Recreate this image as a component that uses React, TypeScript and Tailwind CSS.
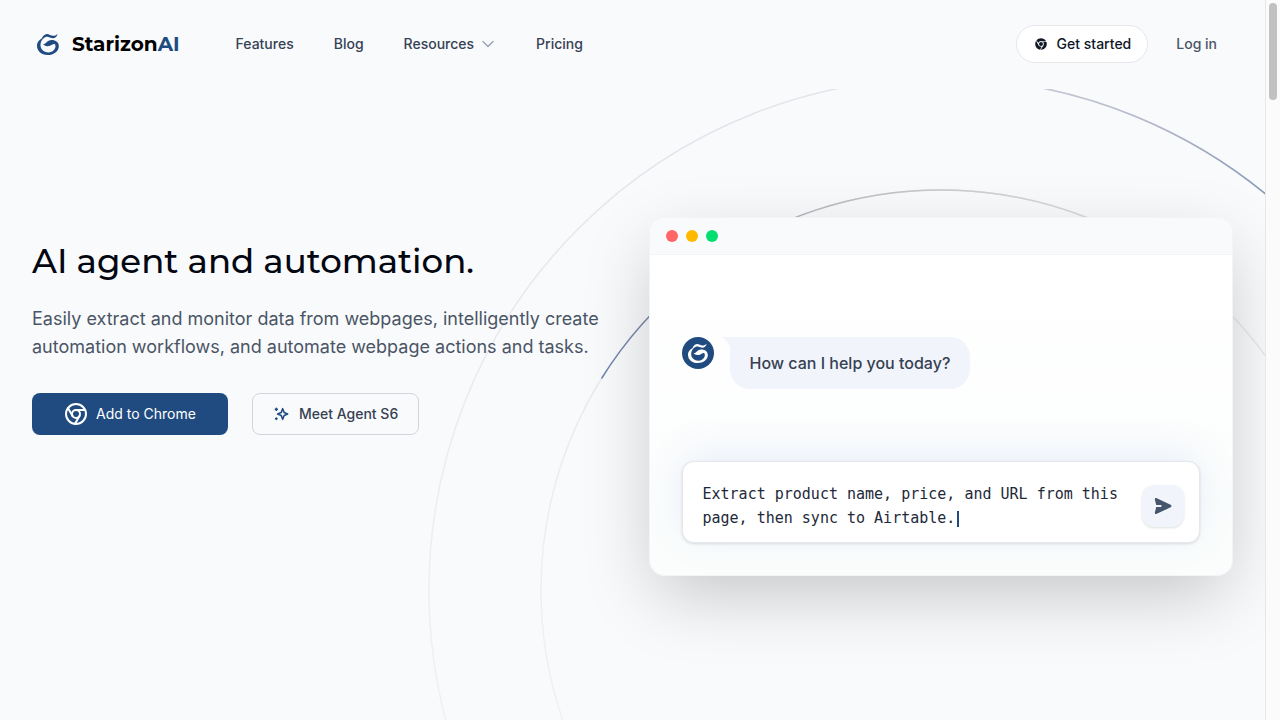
import { Chrome } from 'lucide-react'
import { FaChrome } from 'react-icons/fa'
import { HiOutlineChevronDown } from 'react-icons/hi2'

const LogoMark = ({ className }: { className?: string }) => (
  <svg viewBox="0 0 24 24" fill="currentColor" className={className} aria-hidden="true">
    <path d="M5.500 5.200C8 1.300 10.800.2 13.600 1.900c3.400 1.800 5.900 1.600 8.900-.9-1.500 4.500-4.500 5.700-8.500 3.900-2.500-1.200-4.800-1-7.500 1.500z" />
    <path d="M8 5C3 6.500 0 9.800 0 14c0 6 5 10 11.500 10 7 0 12.300-4 12.300-9.600l-3.600-1.200c.5 4.800-3.200 8-7.700 8C7.500 21.200 3.800 18 3.800 13.200 3.800 10 5 7.500 8 5z" />
    <path d="M6.500 12.600c3-.2 4.800-4.900 9.300-4.900 4.800 0 8 2.500 8 6.700l-3.500-.4c-.2-1.500-1-2.200-2.500-1.800-2.500.7-3.500 2.300-6.800 2.200-2-.1-3-1-4.500-1.800z" />
  </svg>
)

const Sparkles = () => (
  <svg
    viewBox="0 0 24 24"
    fill="none"
    stroke="currentColor"
    strokeWidth="2.4"
    strokeLinejoin="round"
    strokeLinecap="round"
    className="size-4 text-[#204b80]"
    aria-hidden="true"
  >
    <path d="M14.500 4l2.200 5.800L22 12l-5.300 2.200-2.200 5.800-2.200-5.800L7 12l5.300-2.200z" />
    <path d="M5 3.500v3M3.500 5h3M5 18v2M4 19h2" />
  </svg>
)

const SendIcon = () => (
  <svg viewBox="0 0 20 20" fill="currentColor" className="size-[18px]" aria-hidden="true">
    <path d="M1 3C.7 1.600 1.800.7 3.100 1.300l15.300 7.200c1.300.6 1.300 2.400 0 3L3.100 18.700C1.800 19.300.7 18.400 1 17l1.500-5.900h5.700V8.900H2.500z" />
  </svg>
)

const Orbits = () => (
  <svg
    viewBox="0 0 1026 1026"
    fill="none"
    className="pointer-events-none absolute -top-[140px] left-1/2 -z-10 size-[1026px] max-w-none -translate-x-1/2"
    aria-hidden="true"
  >
    <defs>
      <linearGradient id="base" x1="0" y1="0" x2="0" y2="1">
        <stop offset="0" stopColor="#e2e4e9" />
        <stop offset="0.5" stopColor="#edeff2" />
        <stop offset="1" stopColor="#f3f4f6" />
      </linearGradient>
      <linearGradient id="outer" gradientUnits="userSpaceOnUse" x1="513" y1="0" x2="850" y2="140">
        <stop offset="0" stopColor="#d3d5da" />
        <stop offset="0.6" stopColor="#b3b7c9" />
        <stop offset="1" stopColor="#7f93b6" />
      </linearGradient>
      <linearGradient id="inner" gradientUnits="userSpaceOnUse" x1="173" y1="0" x2="700" y2="0">
        <stop offset="0" stopColor="#6f86b0" />
        <stop offset="0.15" stopColor="#7d87a3" />
        <stop offset="0.4" stopColor="#b9bbbf" />
        <stop offset="1" stopColor="#dfe0e3" />
      </linearGradient>
    </defs>
    <circle cx="513" cy="513" r="512" stroke="url(#base)" strokeWidth="1.5" />
    <circle cx="513" cy="513" r="400" stroke="url(#base)" strokeWidth="1.5" />
    <path d="M513 1A512 512 0 0 1 875 151" stroke="url(#outer)" strokeWidth="1.5" />
    <path d="M173.500 301.500A400 400 0 0 1 660 141" stroke="url(#inner)" strokeWidth="1.5" />
  </svg>
)

const navLink = 'text-sm font-medium text-gray-700'

const Header = () => (
  <header className="flex h-[89px] items-center justify-between px-8 pb-0.5">
    <div className="flex items-center gap-14">
      <a href="#" className="flex items-center gap-3 pl-1">
        <span className="flex size-6 items-center justify-center text-[#204b80]">
          <LogoMark className="size-[22px]" />
        </span>
        <span className="font-[Montserrat,Inter,sans-serif] text-xl font-bold text-black">
          Starizon<span className="text-[#204b80]">AI</span>
        </span>
      </a>
      <nav className="flex items-center gap-10">
        <a href="#" className={navLink}>
          Features
        </a>
        <a href="#" className={navLink}>
          Blog
        </a>
        <button type="button" className="flex items-center gap-1.5 text-sm font-medium text-gray-700">
          Resources
          <HiOutlineChevronDown className="size-4 text-gray-400" strokeWidth="2" aria-hidden="true" />
        </button>
        <a href="#" className={navLink}>
          Pricing
        </a>
      </nav>
    </div>
    <div className="flex items-center gap-7 pr-4">
      <a
        href="#"
        className="flex h-[38px] items-center gap-2 rounded-full border border-gray-200 bg-white px-4 text-sm font-medium text-gray-900"
      >
        <FaChrome className="size-4 p-0.5" aria-hidden="true" />
        Get started
      </a>
      <a href="#" className="text-sm font-medium text-gray-600">
        Log in
      </a>
    </div>
  </header>
)

const Intro = () => (
  <div className="mt-5 flex flex-col items-start">
    <h1 className="font-[Montserrat,Inter,sans-serif] text-[34px] leading-[48px] font-medium text-gray-950">
      AI agent and automation.
    </h1>
    <p className="mt-5 text-lg leading-7 text-gray-600">
      Easily extract and monitor data from webpages, intelligently create automation workflows, and
      automate webpage actions and tasks.
    </p>
    <div className="mt-8 flex items-center gap-6">
      <a
        href="#"
        className="flex h-[42px] w-[196px] items-center justify-center gap-2 rounded-lg bg-[#204b80] text-sm text-white"
      >
        <Chrome className="size-6" aria-hidden="true" />
        Add to Chrome
      </a>
      <a
        href="#"
        className="flex h-[42px] items-center gap-2.5 rounded-lg border border-gray-300 px-5 text-sm font-medium text-gray-700"
      >
        <Sparkles />
        Meet Agent S6
      </a>
    </div>
  </div>
)

const AgentWindow = () => (
  <div className="overflow-hidden rounded-2xl border border-gray-100 bg-linear-to-b from-white to-[#fbfdfc] shadow-[0_24px_72px_-8px_rgba(0,0,0,0.22)]">
    <div className="flex h-[37px] items-center gap-2 border-b border-gray-100 bg-[#f9fafc] px-4">
      <span className="size-3 rounded-full bg-[#ff6467]" />
      <span className="size-3 rounded-full bg-[#ffb900]" />
      <span className="size-3 rounded-full bg-[#05df72]" />
    </div>
    <div className="px-8 pt-[82px] pb-8">
      <div className="flex items-start gap-2">
        <span className="flex size-8 items-center justify-center rounded-full bg-[#204b80] text-white">
          <LogoMark className="size-5" />
        </span>
        <div className="flex items-start">
          <svg viewBox="0 0 10 16" className="-mr-0.5 h-4 w-2.5 text-[#f1f4fa]" aria-hidden="true">
            <path d="M0 0h10v16C8 8 5 3 0 0z" fill="currentColor" />
          </svg>
          <p className="rounded-[20px] rounded-tl-none bg-[#f1f4fa] px-5 py-3.5 text-base leading-6 font-medium text-gray-700">
            How can I help you today?
          </p>
        </div>
      </div>
      <div className="mt-[72px] flex items-center justify-between gap-5 rounded-xl border border-gray-200 bg-white pt-5 pr-[15px] pb-3 pl-5 shadow-[0_1px_3px_rgba(0,0,0,0.12),0_-8px_40px_rgba(70,110,220,0.1)]">
        <p className="font-['DejaVu_Sans_Mono',monospace] text-[15px] leading-6 text-gray-800">
          Extract product name, price, and URL from this page, then sync to Airtable.
          <span className="ml-0.5 inline-block h-4 w-0.5 bg-[#204b80] align-middle" />
        </p>
        <button
          type="button"
          aria-label="Send"
          className="flex size-[42px] shrink-0 items-center justify-center rounded-xl bg-[#f1f4fa] text-slate-600 shadow-sm"
        >
          <SendIcon />
        </button>
      </div>
    </div>
  </div>
)

const App = () => {
  return (
    <div className="flex min-h-screen bg-[#f9fafc] font-[Inter,sans-serif] antialiased">
      <div className="flex min-w-0 flex-1 flex-col">
        <Header />
        <main className="relative isolate flex-1 overflow-hidden px-8 pt-32 pb-36">
          <div className="grid grid-cols-2 items-start gap-8">
            <Intro />
            <div className="relative">
              <Orbits />
              <AgentWindow />
            </div>
          </div>
        </main>
      </div>
      <div className="w-[15px] shrink-0 border-l border-gray-200 bg-[#fbfbfb] px-[3px] py-[3px]" aria-hidden="true">
        <div className="h-[97px] w-2 rounded-full bg-[#c1c1c1]" />
      </div>
    </div>
  )
}

export default App
